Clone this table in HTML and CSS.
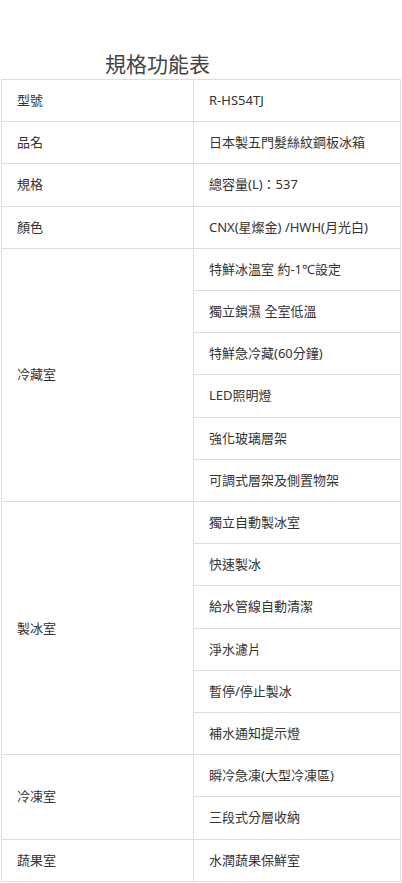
FILE: index.html
```html
<!DOCTYPE html>
<html lang="zh-Hant">
<head>
<meta charset="utf-8">
<title>規格功能表</title>
<link rel="stylesheet" href="styles.css">
</head>
<body>
<div class="page">
  <h2 class="title">規格功能表</h2>
  <table class="spec">
    <colgroup><col class="c1"><col class="c2"></colgroup>
    <tbody>
      <tr><td>型號</td><td>R-HS54TJ</td></tr>
      <tr><td>品名</td><td>日本製五門髮絲紋鋼板冰箱</td></tr>
      <tr><td>規格</td><td>總容量(L)：537</td></tr>
      <tr><td>顏色</td><td>CNX(星燦金) /HWH(月光白)</td></tr>
      <tr><td rowspan="6">冷藏室</td><td>特鮮冰溫室 約-1℃設定</td></tr>
      <tr><td>獨立鎖濕 全室低溫</td></tr>
      <tr><td>特鮮急冷藏(60分鐘)</td></tr>
      <tr><td>LED照明燈</td></tr>
      <tr><td>強化玻璃層架</td></tr>
      <tr><td>可調式層架及側置物架</td></tr>
      <tr><td rowspan="6">製冰室</td><td>獨立自動製冰室</td></tr>
      <tr><td>快速製冰</td></tr>
      <tr><td>給水管線自動清潔</td></tr>
      <tr><td>淨水濾片</td></tr>
      <tr><td>暫停/停止製冰</td></tr>
      <tr><td>補水通知提示燈</td></tr>
      <tr><td rowspan="2">冷凍室</td><td>瞬冷急凍(大型冷凍區)</td></tr>
      <tr><td>三段式分層收納</td></tr>
      <tr><td>蔬果室</td><td>水潤蔬果保鮮室</td></tr>
    </tbody>
  </table>
</div>
</body>
</html>
```

FILE: styles.css
```css
html, body {
  margin: 0;
  padding: 0;
  background: #ffffff;
}
body {
  font-family: "Noto Sans", "Noto Sans CJK TC", sans-serif;
  color: #333333;
}
.page {
  padding: 47px 2px 0 1px;
}
.title {
  margin: 0;
  padding-left: 104px;
  font-family: "Noto Sans CJK TC", sans-serif;
  font-size: 21px;
  line-height: 32px;
  font-weight: 400;
  color: #444444;
}
.spec {
  width: 400px;
  border-collapse: collapse;
  table-layout: fixed;
  font-size: 13px;
}
.spec .c1 {
  width: 192px;
}
.spec td {
  border: 1px solid #dddddd;
  padding: 10px 14px 10px 15px;
  line-height: 21.2px;
  vertical-align: middle;
  white-space: nowrap;
}
```
